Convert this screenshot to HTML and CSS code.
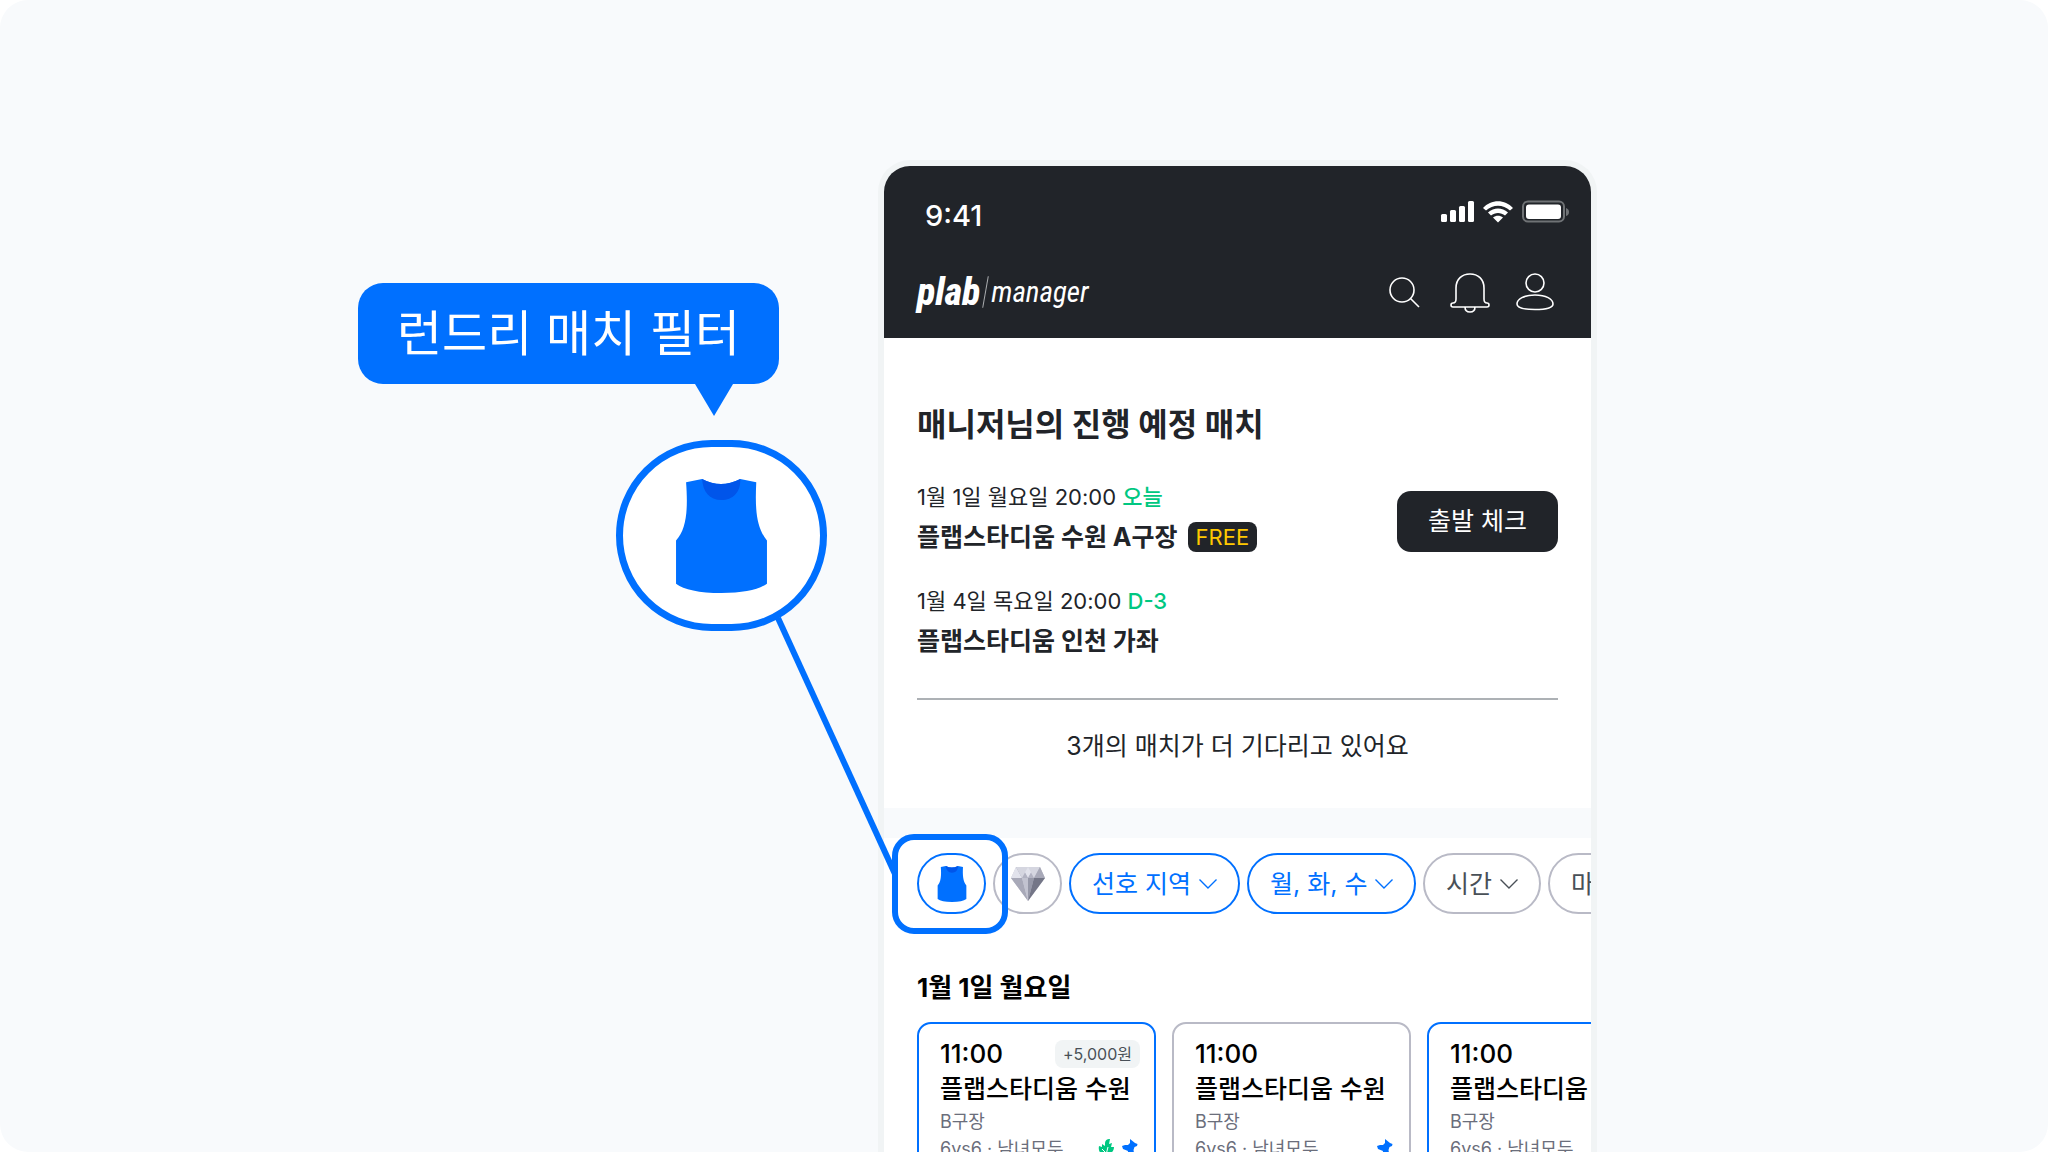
FILE: index.html
```html
<!DOCTYPE html>
<html lang="ko">
<head>
  <meta charset="UTF-8" />
  <meta name="viewport" content="width=device-width, initial-scale=1.0"/>
  <title>plab manager</title>
  <link rel="stylesheet" href="styles.css">
</head>
<body>
  <!-- shared shapes -->
  <svg class="sprite" aria-hidden="true">
    <symbol id="vest" viewBox="0 0 272 341">
      <path fill="#0070ff" d="M30 10L78 0Q134 30 192 0L240 10C236 90 240 145 272 184V313Q235 340 136 341Q35 340 0 313V184C32 150 36 90 30 10Z"/>
      <path fill="#0055ea" d="M78 0Q134 30 192 0C194 40 170 63 136 63C100 63 80 38 78 0Z"/>
    </symbol>
    <symbol id="chevron" viewBox="0 0 18 10">
      <path fill="none" stroke="currentColor" stroke-width="1.4" d="M.5 .5L9 9L17.500 .5"/>
    </symbol>
    <symbol id="pin" viewBox="0 0 16 20">
      <path fill="#0070ff" d="M8 0L13 4L15.500 5L15 7L12.500 8L11.500 11L12 14L9 13L5 19L6 12L1 10L0 7L3 6L6 6L8 4Z"/>
    </symbol>
    <symbol id="sprout" viewBox="0 0 16 20">
      <path fill="#00c781" d="M7 5C7 1 9 0 12 0L11 5L14 4L13 8L16 8C16 12 13 15 9 16V20H7V16C2 15 0 12 1 7L4 8L4 5L7 7Z"/>
      <path stroke="#fff" stroke-width="1" fill="none" d="M8 16L10 8M7 13L4 10"/>
    </symbol>
  </svg>

  <main class="scene">
    <div class="callout">
      <div class="bubble">런드리 매치 필터</div>
      <div class="lens"><svg class="vest-lg"><use href="#vest"/></svg></div>
      <svg class="connector" viewBox="0 0 130 270"><path stroke="#0070ff" stroke-width="6" d="M6 6L123 262"/></svg>
    </div>

    <div class="phone">
      <header class="top">
        <div class="status">
          <span class="clock">9:41</span>
          <svg class="signals" viewBox="0 0 130 24" fill="#fff">
            <rect x="1" y="14" width="6" height="8" rx="1.500"/>
            <rect x="10" y="10" width="6" height="12" rx="1.500"/>
            <rect x="19" y="6" width="6" height="16" rx="1.500"/>
            <rect x="28" y="1" width="6" height="21" rx="1.500"/>
            <path d="M43 8C51-1 65-1 73 8L70 10.500C63 4 53 4 46 10.500ZM48 12.500C54 7 62 7 68 12.500L65 15.500C61 12 55 12 51 15.500ZM53 17.500C56 15 60 15 63 17.500L58 22.500Z"/>
            <rect x="83" y="1.500" width="41" height="20" rx="5" fill="none" stroke="#6f7275" stroke-width="2"/>
            <rect x="86" y="4.500" width="35" height="14.500" rx="3"/>
            <path fill="#6f7275" d="M126 8Q129 9 129 12Q129 15 126 16Z"/>
          </svg>
        </div>
        <div class="nav">
          <a class="logo" href="#"><b>plab</b><i></i><span>manager</span></a>
          <div class="tools">
            <button aria-label="검색"><svg viewBox="0 0 32 32"><circle cx="14" cy="14" r="12"/><path d="M22.500 22.500L31 31"/></svg></button>
            <button aria-label="알림"><svg class="bell" viewBox="-2 -1 40 40"><path d="M6 26V15C6 6 12 1 20 1S34 6 34 15V26Q34 30 37 30Q39 30 39 32T37 34H3Q1 34 1 32T3 30Q6 30 6 26M15 34Q15 39 20 39T25 34"/></svg></button>
            <button aria-label="내 정보"><svg class="user" viewBox="0 0 38 38"><circle cx="19" cy="10" r="9"/><path d="M1 31C1 26 8 22 19 22S37 26 37 31C37 35 30 36.500 19 36.500S1 35 1 31Z"/></svg></button>
          </div>
        </div>
      </header>

      <section class="upcoming">
        <h1>매니저님의 진행 예정 매치</h1>
        <div class="match">
          <div>
            <p class="when">1월 1일 월요일 20:00 <em>오늘</em></p>
            <p class="where">플랩스타디움 수원 A구장 <span class="free">FREE</span></p>
          </div>
          <button class="check">출발 체크</button>
        </div>
        <div class="match">
          <div>
            <p class="when">1월 4일 목요일 20:00 <em>D-3</em></p>
            <p class="where">플랩스타디움 인천 가좌</p>
          </div>
        </div>
        <p class="more">3개의 매치가 더 기다리고 있어요</p>
      </section>

      <section class="list">
        <div class="filters">
          <div class="spot"><button class="chip on round" aria-label="런드리 매치"><svg class="vest-sm"><use href="#vest"/></svg></button></div>
          <button class="chip round" aria-label="다이아">
            <svg class="gem" viewBox="0 0 34 34">
              <path fill="#c9cad6" d="M5 0H29L34 11L17 34L0 11Z"/>
              <path fill="#e2e3ec" d="M5 0L11 11H0ZM11 0L17 11L23 0Z"/>
              <path fill="#b2b3c2" d="M5 0H11L17 11H11ZM29 0H23L17 11H23Z"/>
              <path fill="#d5d6e0" d="M11 0L5 0L11 11L17 0ZM17 0L23 11L29 0Z"/>
              <path fill="#a8a9b8" d="M0 11H11L17 34ZM29 0L34 11H23Z"/>
              <path fill="#c2c3d0" d="M11 11H17V34Z"/>
              <path fill="#9698a8" d="M17 11H23L17 34Z"/>
              <path fill="#747687" d="M23 11H34L17 34Z"/>
            </svg>
          </button>
          <label class="chip on"><select aria-label="지역"><option>선호 지역</option></select><svg class="chev"><use href="#chevron"/></svg></label>
          <label class="chip on"><select aria-label="요일"><option>월, 화, 수</option></select><svg class="chev"><use href="#chevron"/></svg></label>
          <label class="chip"><select aria-label="시간"><option>시간</option></select><svg class="chev"><use href="#chevron"/></svg></label>
          <label class="chip"><select aria-label="마감"><option>마감</option></select><svg class="chev"><use href="#chevron"/></svg></label>
        </div>

        <h2>1월 1일 월요일</h2>
        <div class="cards">
          <article class="card on">
            <div class="row"><time>11:00</time><span class="bonus">+5,000원</span></div>
            <h3>플랩스타디움 수원</h3>
            <p>B구장</p>
            <div class="row"><p>6vs6 · 남녀모두</p><div class="marks"><svg><use href="#sprout"/></svg><svg><use href="#pin"/></svg></div></div>
          </article>
          <article class="card">
            <div class="row"><time>11:00</time></div>
            <h3>플랩스타디움 수원</h3>
            <p>B구장</p>
            <div class="row"><p>6vs6 · 남녀모두</p><div class="marks"><svg><use href="#pin"/></svg></div></div>
          </article>
          <article class="card on">
            <div class="row"><time>11:00</time></div>
            <h3>플랩스타디움 수원</h3>
            <p>B구장</p>
            <div class="row"><p>6vs6 · 남녀모두</p></div>
          </article>
        </div>
      </section>
    </div>
  </main>
</body>
</html>
```
FILE: styles.css
```css
* {
  box-sizing: border-box;
  margin: 0;
  padding: 0;
}
html {
  background: #fff;
}
body {
  height: 100vh;
  overflow: hidden;
  border-radius: 28px;
  background: #f8fafc;
  font-family: Inter, "Noto Sans CJK KR", sans-serif;
  color: #212429;
}
button, select {
  font: inherit;
  color: inherit;
  background: none;
  border: 0;
  appearance: none;
}
svg {
  display: block;
}
.sprite {
  position: absolute;
  width: 0;
  height: 0;
}
.scene {
  display: flex;
  justify-content: center;
  padding: 160px 93px 0 0;
}

/* callout */
.callout {
  position: relative;
  flex: 0 0 520px;
  padding-top: 123px;
}
.bubble {
  position: relative;
  width: max-content;
  padding: 16px 39px 15px;
  border-radius: 25px;
  background: #0070ff;
  color: #fff;
  font-size: 49px;
  line-height: 70px;
}
.bubble::after {
  content: "";
  position: absolute;
  top: 100%;
  right: 46px;
  border: 19px solid transparent;
  border-top: 32px solid #0070ff;
  border-bottom: 0;
}
.lens {
  display: flex;
  align-items: center;
  justify-content: center;
  width: 211px;
  height: 191px;
  margin: 56px 0 0 258px;
  border: 7px solid #0070ff;
  border-radius: 96px;
  background: #fff;
}
.vest-lg {
  width: 91px;
  height: 114px;
}
.connector {
  position: absolute;
  z-index: 1;
  top: 452px;
  left: 414px;
  width: 130px;
  height: 270px;
}

/* phone */
.phone {
  flex: 0 0 719px;
  overflow: hidden;
  border: 6px solid #f1f4f5;
  border-bottom: 0;
  border-radius: 32px 32px 0 0;
  background: #fff;
}
.top {
  padding: 32px 21px 0 33px;
  height: 172px;
  background: #212429;
  color: #fff;
}
.status {
  display: flex;
  justify-content: space-between;
  align-items: flex-start;
  padding-left: 8px;
}
.clock {
  font-size: 29px;
  font-weight: 500;
  line-height: 36px;
}
.signals {
  width: 130px;
  height: 24px;
  margin-top: 2px;
}
.nav {
  display: flex;
  justify-content: space-between;
  align-items: center;
  padding: 35px 16px 0 0;
}
.logo {
  display: flex;
  align-items: center;
  gap: 5px;
  color: #fff;
  font-family: "Liberation Sans Narrow", "Roboto Condensed", "DejaVu Sans Condensed", sans-serif;
  font-size: 29px;
  font-weight: 400;
  font-style: italic;
  line-height: 46px;
  text-decoration: none;
}
.logo b {
  font-size: 38px;
  font-weight: 800;
}
.logo i {
  width: 1px;
  height: 32px;
  background: #aeb0b3;
  transform: rotate(10deg);
}
.tools {
  display: flex;
  align-items: center;
  gap: 28px;
}
.tools svg {
  width: 32px;
  height: 32px;
  overflow: visible;
  fill: none;
  stroke: #fff;
  stroke-width: 1.6;
}
.tools .bell {
  width: 40px;
  height: 40px;
}
.tools .user {
  width: 38px;
  height: 38px;
}

/* upcoming matches */
.upcoming {
  padding: 65px 33px 44px;
}
h1 {
  margin-bottom: 34px;
  font-size: 32px;
  font-weight: 700;
  line-height: 44px;
}
.match {
  display: flex;
  justify-content: space-between;
  align-items: flex-end;
  margin-bottom: 33px;
}
.when {
  font-size: 22px;
  line-height: 32px;
}
.when em {
  color: #00c781;
  font-style: normal;
  font-weight: 500;
}
.where {
  display: flex;
  align-items: center;
  gap: 10px;
  margin-top: 9px;
  font-size: 25px;
  font-weight: 700;
  line-height: 30px;
}
.free {
  padding: 0 8px;
  border-radius: 8px;
  background: #212429;
  color: #ffc800;
  font-size: 22px;
  font-weight: 400;
}
.check {
  padding: 0 31px;
  border-radius: 14px;
  background: #212429;
  color: #fff;
  font-size: 25px;
  line-height: 61px;
}
.more {
  margin-top: 42px;
  padding-top: 28px;
  border-top: 2px solid #adb1b5;
  font-size: 25px;
  line-height: 36px;
  text-align: center;
}

/* filters */
.list {
  padding: 15px 0 0 33px;
  border-top: 30px solid #f8fafc;
}
.filters {
  display: flex;
  gap: 7px;
}
.spot {
  position: relative;
}
.spot::after {
  content: "";
  position: absolute;
  z-index: 1;
  inset: -19px -22px -20px -25px;
  border: 6px solid #0070ff;
  border-radius: 22px;
}
.chip {
  flex: none;
  display: flex;
  align-items: center;
  gap: 7px;
  height: 61px;
  padding: 0 21px;
  border: 2px solid #b9bac6;
  border-radius: 31px;
  background: #fff;
  color: #495057;
  font-size: 25px;
}
.chip.on {
  border-color: #0070ff;
  color: #0070ff;
}
.round {
  justify-content: center;
  width: 69px;
  padding: 0;
}
.vest-sm {
  width: 30px;
  height: 36px;
}
.gem {
  width: 34px;
  height: 34px;
}
.chev {
  width: 18px;
  height: 10px;
}

/* match cards */
h2 {
  margin: 56px 0 16px;
  color: #000;
  font-size: 26px;
  font-weight: 700;
  line-height: 36px;
}
.cards {
  display: flex;
  gap: 16px;
}
.card {
  flex: 0 0 239px;
  height: 180px;
  padding: 14px 14px 0 21px;
  border: 2px solid #b9bac6;
  border-radius: 14px;
  color: #6b6e7b;
  font-size: 18px;
  line-height: 27px;
}
.card.on {
  border-color: #0070ff;
}
.row {
  display: flex;
  justify-content: space-between;
  align-items: center;
}
time {
  color: #000;
  font-size: 26px;
  font-weight: 500;
  line-height: 32px;
}
.bonus {
  padding: 0 8px;
  border-radius: 8px;
  background: #f1f4f5;
  color: #495057;
  font-size: 16px;
  line-height: 28px;
}
h3 {
  margin: 1px 0;
  color: #000;
  font-size: 25px;
  font-weight: 500;
  line-height: 36px;
}
.marks {
  display: flex;
  gap: 8px;
  padding-right: 2px;
}
.marks svg {
  width: 16px;
  height: 20px;
}
```
